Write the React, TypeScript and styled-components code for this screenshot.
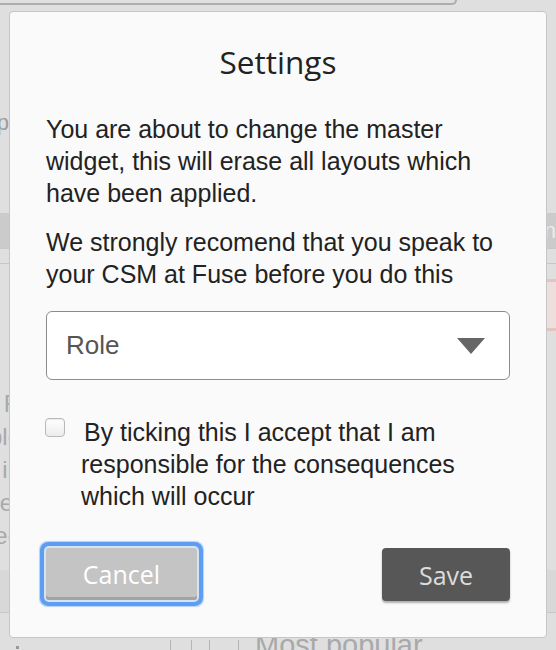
import styled, { createGlobalStyle } from "styled-components";

const GlobalStyle = createGlobalStyle`
  html, body {
    margin: 0;
    padding: 0;
  }
  body {
    width: 556px;
    height: 650px;
    overflow: hidden;
    background: #dfdfdf;
    font-family: "Liberation Sans", Arial, sans-serif;
  }
`;

const Page = styled.div`
  position: relative;
  width: 556px;
  height: 650px;
  overflow: hidden;
  background: #dfdfdf;
  display: flex;
  flex-direction: column;
`;

/* ---------- dimmed page behind the dialog ---------- */

const TopPanel = styled.div`
  flex-shrink: 0;
  width: 455px;
  height: 3px;
  border-right: 2px solid #adadad;
  border-bottom: 2px solid #adadad;
  border-bottom-right-radius: 7px;
`;

const GhostLabel = styled.div`
  margin-top: 106px;
  margin-left: -29px;
  font-size: 22px;
  line-height: 24px;
  color: #9c9c9c;
  white-space: nowrap;
`;

const Band = styled.div<{ $top: number; $height: number; $bg: string }>`
  flex-shrink: 0;
  margin-top: ${(p) => p.$top}px;
  height: ${(p) => p.$height}px;
  background: ${(p) => p.$bg};
  border-bottom: 1px solid #c8c8c8;
  display: flex;
  align-items: center;
  justify-content: flex-end;
  font-size: 22px;
  color: #ececec;
`;

const Rule = styled.div`
  flex-shrink: 0;
  margin-top: 14px;
  height: 1px;
  background: #c6c6c6;
`;

const AlertRow = styled.div`
  flex-shrink: 0;
  margin-top: 15px;
  display: flex;
  justify-content: flex-end;
`;

const AlertBox = styled.div`
  width: 40px;
  height: 46px;
  margin-right: -32px;
  border: 3px solid #e4c3c3;
  border-radius: 5px;
  background: #efdede;
`;

const GhostList = styled.div`
  flex-shrink: 0;
  margin-top: 56px;
  display: flex;
  flex-direction: column;
`;

const GhostLine = styled.div`
  width: 21px;
  display: flex;
  justify-content: flex-end;
  font-size: 24px;
  line-height: 33px;
  color: #a9a9a9;
  white-space: nowrap;
`;

const BottomRow = styled.div`
  flex-shrink: 0;
  margin-top: 17px;
  display: flex;
  align-items: flex-start;
  height: 40px;
`;

const Dot = styled.span`
  margin-left: 16px;
  margin-top: 16px;
  width: 3px;
  height: 3px;
  background: #999;
`;

const Tick = styled.span<{ $gap: number }>`
  margin-left: ${(p) => p.$gap}px;
  margin-top: 10px;
  width: 1px;
  height: 30px;
  background: #b4b4b4;
`;

const GhostTitle = styled.span`
  margin-left: 16px;
  font-size: 29px;
  line-height: 30px;
  color: #a9a9a9;
  white-space: nowrap;
`;

/* ---------- dialog ---------- */

const Dialog = styled.div`
  position: absolute;
  top: 11px;
  left: 9px;
  width: 538px;
  height: 627px;
  box-sizing: border-box;
  border: 1px solid #c6c6c6;
  border-radius: 4px;
  background: #fafafa;
  padding: 30px 36px 0 36px;
  display: flex;
  flex-direction: column;
`;

const Title = styled.h2`
  margin: 0;
  text-align: center;
  font-family: "Open Sans", sans-serif;
  font-weight: 400;
  font-size: 31.5px;
  line-height: 40px;
  color: #222;
`;

const Message = styled.p<{ $gap: number }>`
  margin: ${(p) => p.$gap}px 0 0;
  font-size: 25px;
  line-height: 32px;
  color: #222;
`;

const Select = styled.div`
  margin-top: 21px;
  height: 69px;
  box-sizing: border-box;
  border: 1.5px solid #8c8c8c;
  border-radius: 6px;
  background: #fff;
  display: flex;
  align-items: center;
  justify-content: space-between;
  padding: 0 24px 0 19px;
  font-size: 26px;
  color: #555;
`;

const Caret = styled.span`
  width: 0;
  height: 0;
  border-left: 14px solid transparent;
  border-right: 14px solid transparent;
  border-top: 16px solid #666;
`;

const Consent = styled.label`
  margin-top: 36px;
  display: flex;
  align-items: flex-start;
`;

const Box = styled.span`
  flex-shrink: 0;
  margin-top: 2px;
  margin-left: -1px;
  width: 20px;
  height: 19px;
  box-sizing: border-box;
  border: 1px solid #b9b9b9;
  border-radius: 4px;
  background: linear-gradient(#ffffff, #ececec);
  box-shadow: inset 0 1px 1px rgba(0, 0, 0, 0.08);
`;

const ConsentText = styled.span`
  margin-left: 16px;
  width: 410px;
  text-indent: 3px;
  font-size: 25px;
  line-height: 32px;
  color: #222;
`;

const Actions = styled.div`
  margin-top: 36px;
  display: flex;
  justify-content: space-between;
  align-items: flex-start;
`;

const Button = styled.button<{ $primary?: boolean }>`
  font-family: "Open Sans", sans-serif;
  font-size: 25px;
  border: none;
  padding: 0;
  cursor: pointer;
  height: ${(p) => (p.$primary ? 53 : 52)}px;
  width: ${(p) => (p.$primary ? 128 : 151)}px;
  border-radius: ${(p) => (p.$primary ? 4 : 3)}px;
  background: ${(p) => (p.$primary ? "#575757" : "#c4c4c4")};
  color: ${(p) => (p.$primary ? "#dcdcdc" : "#fff")};
  box-shadow: ${(p) =>
    p.$primary
      ? "0 2px 2px rgba(0, 0, 0, 0.3)"
      : "inset 0 -3px 0 #a3a3a3, 0 0 0 2px #d6e3f5, 0 0 0 6px #5e9ef2, 0 0 1px 7px rgba(94, 158, 242, 0.45)"};
`;

export default function App() {
  return (
    <>
      <GlobalStyle />
      <Page>
        <TopPanel />
        <GhostLabel>Espa</GhostLabel>
        <Band $top={78} $height={35} $bg="#cbcbcb">
          n
        </Band>
        <Rule />
        <AlertRow>
          <AlertBox />
        </AlertRow>
        <GhostList>
          <GhostLine>R</GhostLine>
          <GhostLine>ble</GhostLine>
          <GhostLine>in</GhostLine>
          <GhostLine>er</GhostLine>
          <GhostLine>ee</GhostLine>
        </GhostList>
        <Band $top={18} $height={42} $bg="#d8d8d8" />
        <BottomRow>
          <Dot />
          <Tick $gap={151} />
          <Tick $gap={20} />
          <Tick $gap={17} />
          <Tick $gap={28} />
          <GhostTitle>Most popular</GhostTitle>
        </BottomRow>

        <Dialog>
          <Title>Settings</Title>
          <Message $gap={31}>
            You are about to change the master widget, this will erase all
            layouts which have been applied.
          </Message>
          <Message $gap={17}>
            We strongly recomend that you speak to your CSM at Fuse before you
            do this
          </Message>
          <Select>
            <span>Role</span>
            <Caret />
          </Select>
          <Consent>
            <Box />
            <ConsentText>
              By ticking this I accept that I am responsible for the
              consequences which will occur
            </ConsentText>
          </Consent>
          <Actions>
            <Button>Cancel</Button>
            <Button $primary>Save</Button>
          </Actions>
        </Dialog>
      </Page>
    </>
  );
}
